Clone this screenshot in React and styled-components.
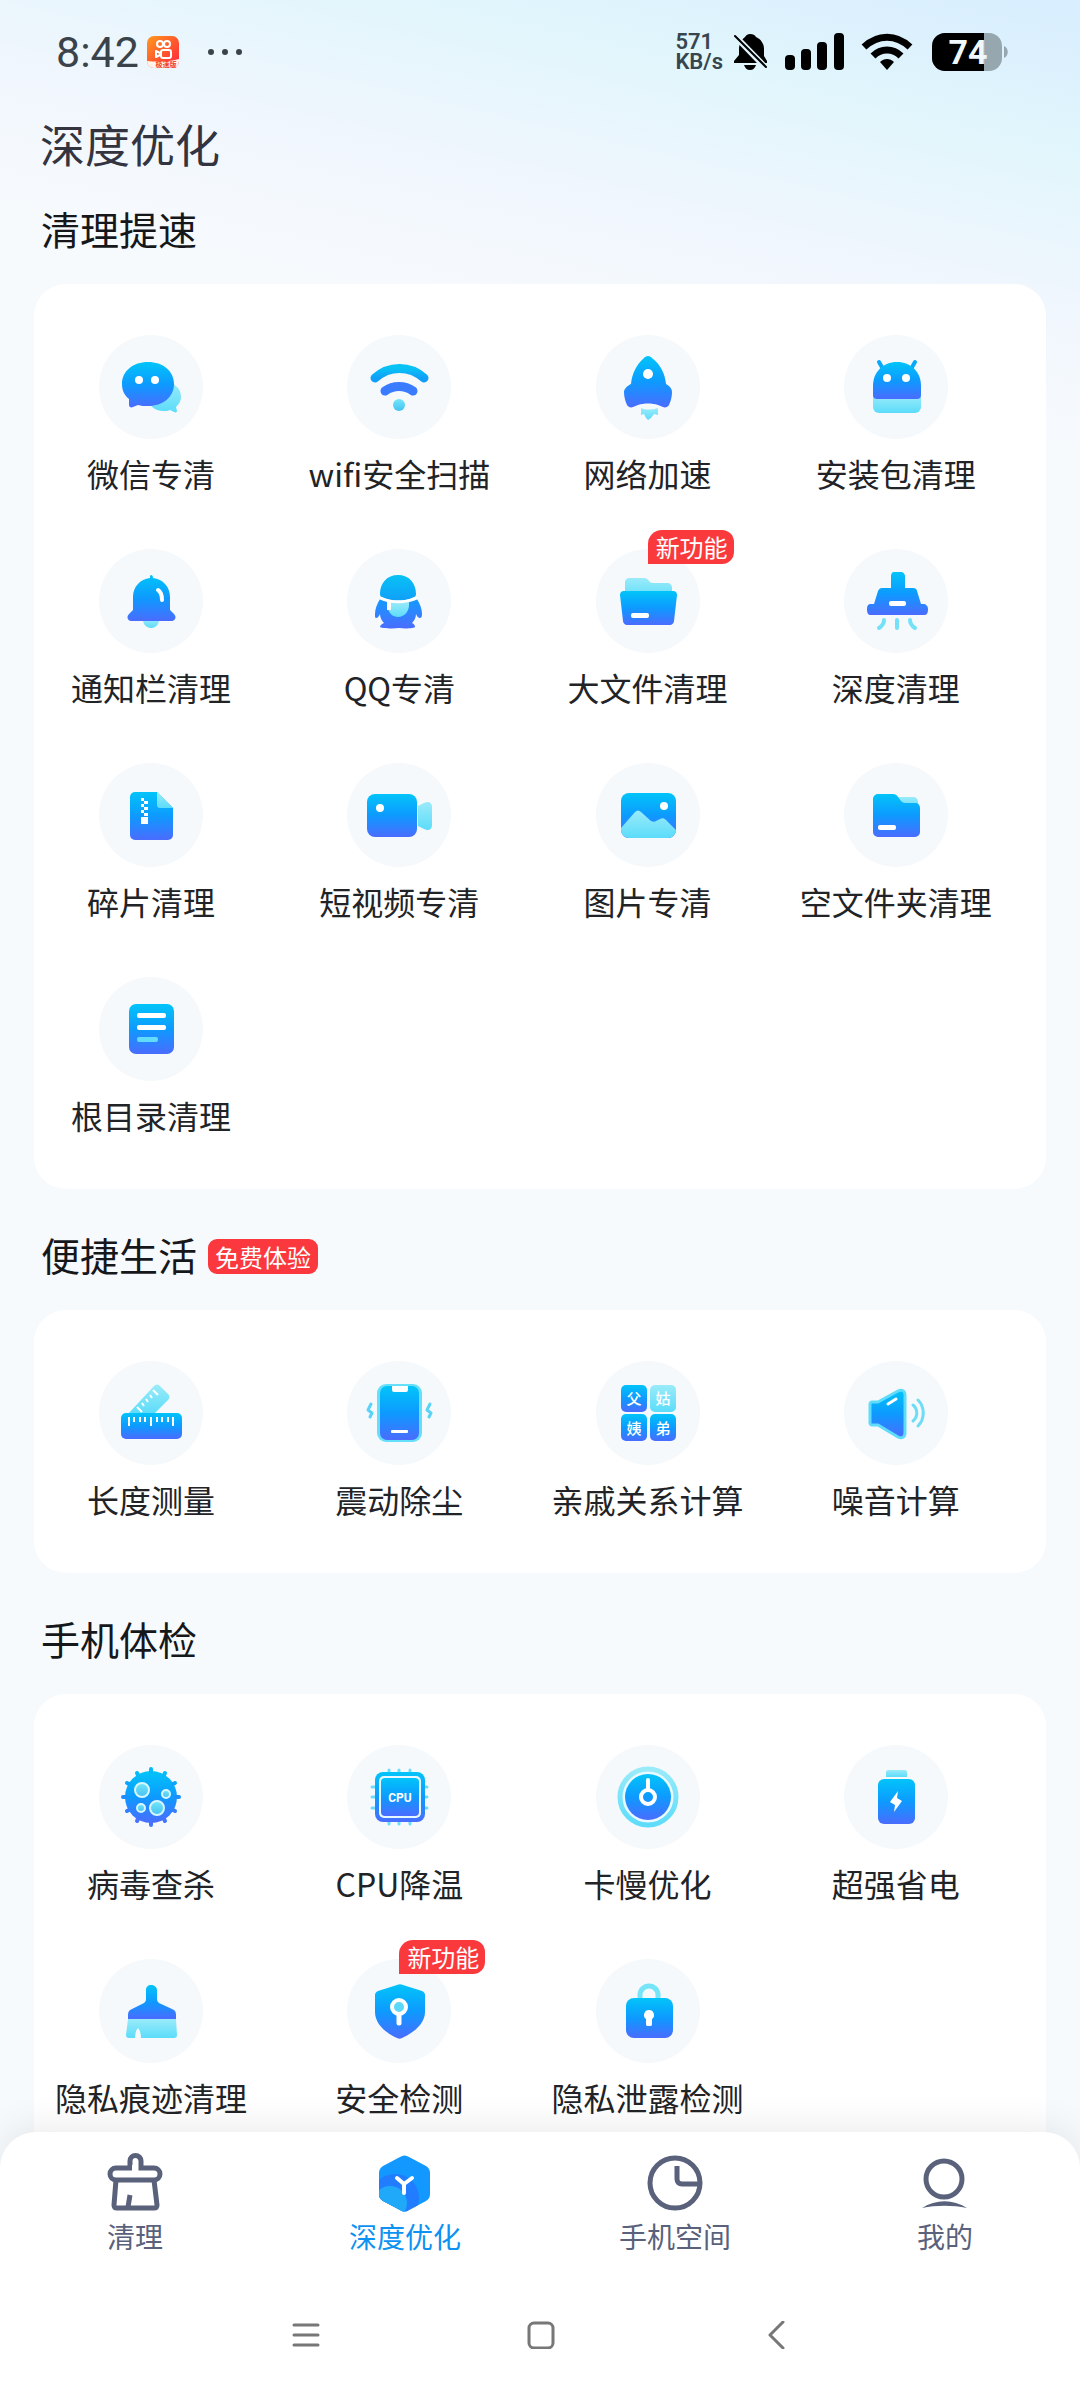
import styled, { createGlobalStyle } from "styled-components";

const GlobalStyle = createGlobalStyle`
  * {
    box-sizing: border-box;
  }

  body {
    margin: 0;
    font-family: "Noto Sans CJK SC", "Noto Sans", sans-serif;
    color: #222326;
  }

  button {
    border: none;
    padding: 0;
    background: none;
    font-family: inherit;
    color: inherit;
    cursor: pointer;
  }
`;

const MAIN = "url(#main)";
const LIGHT = "url(#light)";

/* Every tile icon is drawn on the same 104 x 104 grid */
const icons = {
  wechat: (
    <>
      <path
        fill={LIGHT}
        d="M65 47c10 0 17 6 17 15 0 4-2 7-5 10l1 4c0 1-1 2-3 1l-4-2c-2 1-4 1-6 1-10 0-16-6-16-14s7-15 16-15Z"
      />
      <path
        fill={MAIN}
        d="M49 27c15 0 26 9 26 22s-11 22-26 22c-4 0-7 0-10-1l-5 2c-2 1-4 0-4-2v-6c-5-4-7-9-7-15 0-13 11-22 26-22Z"
      />
      <circle cx="40" cy="45" r="4" fill="#fff" />
      <circle cx="56" cy="45" r="4" fill="#fff" />
    </>
  ),
  wifi: (
    <g fill="none" strokeLinecap="round">
      <path stroke="url(#sky)" strokeWidth="9" d="M28 43a36 36 0 0 1 49 0" />
      <path stroke="#3a7cff" strokeWidth="9" d="M38 56a24 24 0 0 1 28 0" />
      <circle cx="52" cy="70" r="6" fill="url(#lightDeep)" />
    </g>
  ),
  rocket: (
    <>
      <path
        fill={MAIN}
        d="M52 21c2 0 3 1 4 2 9 7 13 16 14 26 4 2 6 5 6 8 0 4-1 9-3 13-1 2-4 3-6 2l-5-2c-6-2-14-2-20 0l-5 2c-2 1-5 0-6-2-2-4-3-9-3-13 0-3 3-6 7-8 1-10 5-19 13-26 1-1 2-2 4-2Z"
      />
      <circle cx="52" cy="39" r="5" fill="#fff" />
      <path
        fill={LIGHT}
        d="M45 73c5 2 11 2 17 0v7l-4-1-3 4-3 2-2-2-2-4-3 1Z"
      />
    </>
  ),
  android: (
    <>
      <path fill={LIGHT} d="M29 60h48v12a6 6 0 0 1-6 6H35a6 6 0 0 1-6-6Z" />
      <path
        stroke="#08a9fb"
        strokeWidth="4"
        strokeLinecap="round"
        d="m35 27 4 7M71 27l-4 7"
      />
      <path
        fill={MAIN}
        d="M53 27c14 0 24 10 24 24v9a4 4 0 0 1-4 4H33a4 4 0 0 1-4-4v-9c0-14 10-24 24-24Z"
      />
      <circle cx="43" cy="43" r="4" fill="#fff" />
      <circle cx="62" cy="43" r="4" fill="#fff" />
    </>
  ),
  bell: (
    <>
      <path fill={LIGHT} d="M44 70h16a8 8 0 0 1-16 2Z" />
      <path
        fill={MAIN}
        d="M52 26c1 0 2 1 2 3 10 1 17 9 17 19v13l4 4c3 3 1 7-2 7H32c-3 0-5-4-2-7l4-4V48c0-10 7-18 17-19 0-2 0-3 1-3Z"
      />
      <path
        stroke="#fff"
        strokeWidth="4"
        strokeLinecap="round"
        fill="none"
        d="M59 41c3 2 4 5 4 10"
      />
    </>
  ),
  qq: (
    <>
      <path
        fill="url(#sky)"
        d="M51 26c11 0 18 8 18 19 0 2-1 3-2 3-10 5-22 5-32 0-1 0-2-1-2-3 0-11 7-19 18-19Z"
      />
      <path
        fill="url(#deep)"
        d="M33 50c11 5 25 5 37 0 3 5 5 10 5 15 0 3-1 4-2 4-2 0-3-2-4-4 0 4-2 7-4 9 2 1 3 2 3 4 0 1-9 2-16 1-7 1-19 0-19-1 0-2 2-3 4-4-2-2-4-5-4-9-1 2-2 4-4 4-1 0-1-1-1-4 0-5 2-10 5-15Z"
      />
      <path fill={LIGHT} d="M42 53c7 1 14 1 20 0v3c0 7-5 12-11 12-5 0-10-4-10-10Z" />
      <path stroke="#fff" strokeWidth="4" d="M42 52v9" />
      <path stroke="#fff" strokeWidth="3" fill="none" d="M33 49c11 5 26 5 37 0" />
    </>
  ),
  bigFolder: (
    <>
      <path
        fill={LIGHT}
        d="M33 29h15c2 0 4 1 5 3 1 1 2 2 4 2h14c3 0 5 2 5 5v12H29V33c0-2 2-4 4-4Z"
      />
      <path
        fill={MAIN}
        d="M28 42h49c3 0 4 2 4 4l-3 26c0 2-2 4-4 4H31c-2 0-4-2-4-4l-3-26c0-2 1-4 4-4Z"
      />
      <rect x="35" y="64" width="18" height="5" rx="2" fill="#fff" />
    </>
  ),
  vacuum: (
    <>
      <path
        fill={MAIN}
        d="M50 23h7c2 0 4 2 4 4v12h8c2 0 4 1 4 3l4 13h2c3 0 5 2 5 5 0 4-1 6-4 6H27c-3 0-4-2-4-6 0-3 1-5 4-5h3l4-13c1-2 2-3 4-3h9V27c0-2 1-4 3-4Z"
      />
      <rect x="45" y="52" width="17" height="5" rx="2" fill="#fff" />
      <path
        stroke="#74e1f8"
        strokeWidth="4"
        strokeLinecap="round"
        fill="none"
        d="M40 71c0 4-2 6-5 8M53 71v8M66 71c0 4 2 6 5 8"
      />
    </>
  ),
  zip: (
    <>
      <path
        fill={MAIN}
        d="M36 29h22l16 16v27a5 5 0 0 1-5 5H36a5 5 0 0 1-5-5V34a5 5 0 0 1 5-5Z"
      />
      <path fill={LIGHT} d="m58 29 16 16H61c-2 0-3-1-3-3Z" />
      <path
        fill="#fff"
        d="M42 35h3v3h-3zM45 38h4v3h-4zM42 41h3v3h-3zM45 44h4v3h-4zM42 47h3v3h-3zM45 50h4v3h-4zM42 54h7v7h-7z"
      />
    </>
  ),
  video: (
    <>
      <path
        fill={LIGHT}
        d="m71 43 6-3c4-2 8-1 8 4v18c0 5-4 6-8 4l-6-3Z"
      />
      <rect x="20" y="31" width="50" height="43" rx="8" fill={MAIN} />
      <circle cx="33" cy="45" r="4" fill="#fff" />
    </>
  ),
  picture: (
    <>
      <rect x="25" y="30" width="55" height="45" rx="8" fill={MAIN} />
      <path
        fill={LIGHT}
        d="m25 65 14-16c2-2 4-2 6 0l10 9c2 1 4 1 5 0l4-2c2-1 4-1 6 1l10 10a8 8 0 0 1-8 8H33a8 8 0 0 1-8-8Z"
      />
      <circle cx="68" cy="43" r="4" fill="#fff" />
    </>
  ),
  folder: (
    <>
      <path fill={LIGHT} d="M52 34h17c3 0 5 2 5 5l1 8H55Z" />
      <path
        fill={MAIN}
        d="M34 31h15c2 0 4 1 5 3l3 4c1 1 3 2 4 2h10c3 0 5 2 5 5v24a5 5 0 0 1-5 5H34a5 5 0 0 1-5-5V36a5 5 0 0 1 5-5Z"
      />
      <rect x="34" y="62" width="18" height="5" rx="2" fill="#fff" />
    </>
  ),
  list: (
    <>
      <rect x="30" y="27" width="45" height="50" rx="7" fill={MAIN} />
      <rect x="38" y="36" width="29" height="5" rx="2" fill="#fff" />
      <rect x="38" y="48" width="29" height="5" rx="2" fill="#fff" />
      <rect x="38" y="60" width="21" height="5" rx="2" fill="#62dcfb" />
    </>
  ),
  ruler: (
    <>
      <path
        fill={LIGHT}
        d="m29 53 26-28c2-2 4-2 6 0l8 8c2 2 2 4 0 6L55 53Z"
      />
      <path
        stroke="#fff"
        strokeWidth="2"
        d="m38 46 5 5M43 42l2 3M47 38l2 3M51 34l2 3M54 29l5 5"
      />
      <rect x="22" y="52" width="61" height="26" rx="5" fill={MAIN} />
      <path
        stroke="#fff"
        strokeWidth="2"
        d="M30 56v9M35 56v5M41 56v5M46 56v5M52 56v9M58 56v5M63 56v5M69 56v5M74 56v9"
      />
    </>
  ),
  phone: (
    <>
      <rect x="30" y="23" width="45" height="58" rx="9" fill="#66e0fa" />
      <rect x="33" y="25" width="39" height="54" rx="7" fill={MAIN} />
      <path fill="#fff" d="M45 25h16v4a2 2 0 0 1-2 2H47a2 2 0 0 1-2-2Z" />
      <rect x="44" y="69" width="17" height="3" rx="1" fill="#fff" />
      <path
        stroke="#59d3f7"
        strokeWidth="3"
        strokeLinecap="round"
        strokeLinejoin="round"
        fill="none"
        d="m24 43-3 6 4 3-2 4M83 43l-3 6 4 3-2 4"
      />
    </>
  ),
  family: (
    <>
      <rect x="25" y="24" width="26" height="27" rx="5" fill={MAIN} />
      <rect x="54" y="24" width="26" height="27" rx="5" fill={LIGHT} />
      <rect x="25" y="53" width="26" height="27" rx="5" fill={MAIN} />
      <rect x="54" y="53" width="26" height="27" rx="5" fill={MAIN} />
      <g fill="#fff" fontSize="15" fontWeight="500" textAnchor="middle">
        <text x="38" y="43">父</text>
        <text x="67" y="43">姑</text>
        <text x="38" y="73">姨</text>
        <text x="67" y="73">弟</text>
      </g>
    </>
  ),
  speaker: (
    <>
      <path
        fill={MAIN}
        stroke="#5fdcfa"
        strokeWidth="3"
        strokeLinejoin="round"
        d="M28 41h6l20-11c4-2 7 0 7 4v38c0 4-3 6-7 4L34 64h-6c-1 0-2-1-2-2V43c0-1 1-2 2-2Z"
      />
      <path
        stroke="#fff"
        strokeWidth="3"
        strokeLinecap="round"
        d="m44 43 8-5"
      />
      <path
        stroke="#6fdcf6"
        strokeWidth="3"
        strokeLinecap="round"
        fill="none"
        d="M69 44c5 4 5 12 0 16M74 39c7 7 7 19 0 26"
      />
    </>
  ),
  virus: (
    <>
      <circle cx="52" cy="52" r="26" fill={MAIN} />
      <g strokeWidth="4" strokeLinecap="round">
        <path stroke="#05b9fa" d="M52 24v3M38 28l1 2M66 28l-1 2" />
        <path stroke="#0aa5fd" d="m28 38 2 1M76 38l-2 1" />
        <path stroke="#1d8eff" d="M24 52h3M80 52h-3" />
        <path stroke="#3280ff" d="m28 66 2-1M76 66l-2-1" />
        <path stroke="#4473ff" d="m38 76 1-2M66 76l-1-2M52 80v-3" />
      </g>
      <g fill="url(#lightDeep)" stroke="#d6f7ff" strokeWidth="2">
        <circle cx="43" cy="45" r="7" />
        <circle cx="58" cy="63" r="7" />
        <circle cx="67" cy="49" r="4" />
        <circle cx="42" cy="63" r="4" />
      </g>
    </>
  ),
  cpu: (
    <>
      <path
        stroke="#6bddf9"
        strokeWidth="3"
        strokeLinecap="round"
        d="M42 25v54M52 25v54M63 25v54M25 42h55M25 52h55M25 63h55"
      />
      <rect x="28" y="27" width="50" height="50" rx="8" fill={MAIN} />
      <rect x="32" y="31" width="42" height="42" rx="5" fill="#e6f8ff" />
      <rect x="34" y="33" width="38" height="38" rx="4" fill={MAIN} />
      <text
        x="53"
        y="57"
        fill="#fff"
        fontFamily="Roboto, sans-serif"
        fontSize="12"
        fontWeight="700"
        textAnchor="middle"
      >
        CPU
      </text>
    </>
  ),
  gauge: (
    <>
      <circle cx="52" cy="52" r="28" fill="#e8f9ff" stroke={LIGHT} strokeWidth="5" />
      <circle cx="52" cy="52" r="23" fill={MAIN} />
      <circle cx="52" cy="52" r="7" fill="none" stroke="#fff" strokeWidth="4" />
      <path stroke="#fff" strokeWidth="4" strokeLinecap="round" d="M52 35v9" />
    </>
  ),
  battery: (
    <>
      <path fill={LIGHT} d="M44 25h17c1 0 2 1 2 2v5H42v-5c0-1 1-2 2-2Z" />
      <rect x="34" y="34" width="37" height="45" rx="6" fill={MAIN} />
      <path fill="#fff" d="m54 46-8 11 5 3-1 7 8-11-5-3Z" />
    </>
  ),
  brush: (
    <>
      <path
        fill={LIGHT}
        d="M29 60h48l1 16c0 2-1 3-3 3H42c0-4-1-8-3-10-2 2-3 6-3 10h-6c-2 0-3-1-3-3Z"
      />
      <path
        fill={MAIN}
        d="M52 26c3 0 6 2 6 5v9c0 2 1 3 2 4l13 6c3 1 4 3 4 6v4H29v-4c0-3 1-5 4-6l12-6c1-1 2-2 2-4v-9c0-3 2-5 5-5Z"
      />
    </>
  ),
  shield: (
    <>
      <path
        fill={MAIN}
        d="m50 26-19 6c-2 1-3 2-3 4v17c0 11 9 20 22 26 2 1 3 1 5 0 13-6 23-15 23-26V36c0-2-1-3-3-4l-19-6c-2-1-4-1-6 0Z"
      />
      <path stroke="#fff" strokeWidth="5" strokeLinecap="round" d="M52 55v9" />
      <circle cx="52" cy="48" r="7" fill="#5cd8f8" stroke="#fff" strokeWidth="4" />
    </>
  ),
  lock: (
    <>
      <path
        stroke="#77e5f9"
        strokeWidth="5"
        fill="none"
        d="M44 42v-6a9 9 0 0 1 18 0v6"
      />
      <rect x="30" y="39" width="47" height="40" rx="8" fill={MAIN} />
      <path
        fill="#fff"
        d="M53 51a5 5 0 0 1 3 9v5c0 2-1 2-3 2s-3 0-3-2v-5a5 5 0 0 1 3-9Z"
      />
    </>
  ),
};

const sections = [
  {
    title: "清理提速",
    items: [
      { icon: "wechat", label: "微信专清" },
      { icon: "wifi", label: "wifi安全扫描" },
      { icon: "rocket", label: "网络加速" },
      { icon: "android", label: "安装包清理" },
      { icon: "bell", label: "通知栏清理" },
      { icon: "qq", label: "QQ专清" },
      { icon: "bigFolder", label: "大文件清理", isNew: true },
      { icon: "vacuum", label: "深度清理" },
      { icon: "zip", label: "碎片清理" },
      { icon: "video", label: "短视频专清" },
      { icon: "picture", label: "图片专清" },
      { icon: "folder", label: "空文件夹清理" },
      { icon: "list", label: "根目录清理" },
    ],
  },
  {
    title: "便捷生活",
    tag: "免费体验",
    items: [
      { icon: "ruler", label: "长度测量" },
      { icon: "phone", label: "震动除尘" },
      { icon: "family", label: "亲戚关系计算" },
      { icon: "speaker", label: "噪音计算" },
    ],
  },
  {
    title: "手机体检",
    items: [
      { icon: "virus", label: "病毒查杀" },
      { icon: "cpu", label: "CPU降温" },
      { icon: "gauge", label: "卡慢优化" },
      { icon: "battery", label: "超强省电" },
      { icon: "brush", label: "隐私痕迹清理" },
      { icon: "shield", label: "安全检测", isNew: true },
      { icon: "lock", label: "隐私泄露检测" },
    ],
  },
];

const tabs = [
  {
    label: "清理",
    icon: (
      <g fill="none" stroke="currentColor" strokeWidth="5">
        <path d="M25 16V9a5 5 0 0 1 11 0v7h13a6 6 0 0 1 0 12H11a6 6 0 0 1 0-12Z" />
        <path
          strokeLinejoin="round"
          d="M11 28 9 53c0 2 1 3 3 3h37c2 0 3-1 3-3l-3-25"
        />
        <path d="m25 43-2 12" />
        <path stroke="#fff" strokeWidth="6" d="M30 13v8" />
      </g>
    ),
  },
  {
    label: "深度优化",
    active: true,
    icon: (
      <>
        <clipPath id="hexagon">
          <path d="M25 5c3-2 6-2 9 0l17 9c3 2 4 4 4 7v21c0 3-1 5-4 7l-17 9c-3 2-6 2-9 0L8 49c-3-2-4-4-4-7V21c0-3 1-5 4-7Z" />
        </clipPath>
        <g clipPath="url(#hexagon)">
          <path fill="#1298ff" d="M0 0h60v60H0z" />
          <circle cx="20" cy="46" r="24" fill="#217cff" />
          <circle cx="15" cy="51" r="17" fill="#1fa9f8" />
        </g>
        <path
          stroke="#fff"
          strokeWidth="4"
          strokeLinecap="round"
          strokeLinejoin="round"
          fill="none"
          d="m22 26 7 6 8-6M29 32v9"
        />
      </>
    ),
  },
  {
    label: "手机空间",
    icon: (
      <g fill="none" stroke="currentColor" strokeWidth="5">
        <circle cx="30" cy="31" r="25" />
        <path d="M32 14v13c0 3 2 5 5 5h17" />
      </g>
    ),
  },
  {
    label: "我的",
    icon: (
      <>
        <circle
          cx="29"
          cy="27"
          r="18"
          fill="none"
          stroke="currentColor"
          strokeWidth="5"
        />
        <path fill="currentColor" d="M7 56c14-9 31-9 45 0-14-3-31-3-45 0Z" />
      </>
    ),
  },
];

const IconDefs = () => (
  <HiddenSvg aria-hidden="true">
    <defs>
      <linearGradient id="main" x1="0" y1="0" x2="0" y2="1">
        <stop offset="0" stopColor="#02c4f9" />
        <stop offset="0.5" stopColor="#0d9aff" />
        <stop offset="1" stopColor="#4a6cff" />
      </linearGradient>
      <linearGradient id="light" x1="0" y1="0" x2="0" y2="1">
        <stop offset="0" stopColor="#9aebf9" />
        <stop offset="1" stopColor="#5cdcfa" />
      </linearGradient>
      <linearGradient id="lightDeep" x1="0" y1="0" x2="0" y2="1">
        <stop offset="0" stopColor="#74e6f8" />
        <stop offset="1" stopColor="#45c2f2" />
      </linearGradient>
      <linearGradient id="sky" x1="0" y1="0" x2="0" y2="1">
        <stop offset="0" stopColor="#08c2f5" />
        <stop offset="1" stopColor="#109ff8" />
      </linearGradient>
      <linearGradient id="deep" x1="0" y1="0" x2="0" y2="1">
        <stop offset="0" stopColor="#149bff" />
        <stop offset="1" stopColor="#4a6cff" />
      </linearGradient>
      <linearGradient id="camera" x1="0" y1="0" x2="1" y2="1">
        <stop offset="0" stopColor="#ff9a1f" />
        <stop offset="0.5" stopColor="#ff5a2c" />
        <stop offset="1" stopColor="#ff2140" />
      </linearGradient>
    </defs>
  </HiddenSvg>
);

const StatusBar = () => (
  <Status>
    <Time>8:42</Time>
    <AppIcon viewBox="0 0 32 32" aria-hidden="true">
      <rect width="32" height="32" rx="7" fill="url(#camera)" />
      <path fill="#fff3ea" d="M0 25c10 1 21 1 32-2v2a7 7 0 0 1-7 7H7a7 7 0 0 1-7-7Z" />
      <g fill="none" stroke="#fff" strokeWidth="2">
        <circle cx="13" cy="8" r="3" />
        <circle cx="20" cy="8" r="3" />
        <rect x="14" y="14" width="10" height="8" rx="2" />
        <path strokeLinejoin="round" d="m9 15 4 2v2l-4 2Z" />
      </g>
      <text x="19" y="31" fontSize="7" fontWeight="700" fill="#f2402a" textAnchor="middle">
        极速版
      </text>
    </AppIcon>
    <More viewBox="0 0 40 8" aria-hidden="true">
      <circle cx="6" cy="4" r="3" />
      <circle cx="20" cy="4" r="3" />
      <circle cx="34" cy="4" r="3" />
    </More>
    <Speed>
      <span>571</span>
      <span>KB/s</span>
    </Speed>
    <Indicators viewBox="0 0 276 38" aria-hidden="true">
      {/* muted bell */}
      <path d="M17 1c3 0 5 1 6 3 5 2 8 7 8 12v7l3 5v2H1v-2l5-6v-6c0-5 3-10 6-12 1-2 3-3 5-3Z" />
      <path d="M11 32h12c-1 3-3 5-6 5s-5-2-6-5Z" />
      <path stroke="#e1f4fc" strokeWidth="6" d="m0 1 34 35" />
      <path stroke="#000" strokeWidth="2" strokeLinecap="round" d="m2 3 31 31" />
      {/* signal */}
      <rect x="52" y="22" width="10" height="15" rx="4" />
      <rect x="68" y="16" width="10" height="21" rx="4" />
      <rect x="84" y="9" width="10" height="28" rx="4" />
      <rect x="101" y="0" width="10" height="37" rx="4" />
      {/* wifi */}
      <g fill="none" stroke="#000" strokeWidth="7">
        <path d="M131 14c14-13 32-13 46 0" />
        <path d="M140 23c8-8 20-8 28 0" />
      </g>
      <path d="M154 37 147 29c4-4 10-4 14 0Z" />
      {/* battery */}
      <clipPath id="cell">
        <rect x="199" y="0" width="70" height="38" rx="13" />
      </clipPath>
      <g clipPath="url(#cell)">
        <path fill="#96a7b0" d="M199 0h70v38h-70z" />
        <path d="M199 0h52v38h-52z" />
      </g>
      <path fill="#96a7b0" d="M271 13c5 2 5 10 0 12Z" />
      <text
        x="235"
        y="31"
        fill="#eef8fd"
        fontFamily="Roboto, sans-serif"
        fontSize="34"
        fontWeight="700"
        textAnchor="middle"
      >
        74
      </text>
    </Indicators>
  </Status>
);

const Section = ({ title, tag, items, first }) => (
  <section>
    <SectionTitle $first={first}>
      {title}
      {tag && <Tag>{tag}</Tag>}
    </SectionTitle>
    <Card>
      {items.map((item) => (
        <Tile key={item.label}>
          <Bubble viewBox="0 0 104 104" aria-hidden="true">
            <circle cx="52" cy="52" r="52" fill="#f5f9fc" />
            {icons[item.icon]}
          </Bubble>
          {item.label}
          {item.isNew && <NewBadge>新功能</NewBadge>}
        </Tile>
      ))}
    </Card>
  </section>
);

const App = () => {
  return (
    <Screen>
      <GlobalStyle />
      <IconDefs />
      <StatusBar />
      <Content>
        <PageTitle>深度优化</PageTitle>
        {sections.map((section, index) => (
          <Section key={section.title} first={index === 0} {...section} />
        ))}
      </Content>
      <Bottom>
        <TabBar>
          {tabs.map((tab) => (
            <Tab key={tab.label} $active={tab.active}>
              <TabIcon viewBox="0 0 60 60" aria-hidden="true">
                {tab.icon}
              </TabIcon>
              {tab.label}
            </Tab>
          ))}
        </TabBar>
        <SystemBar>
          <button aria-label="最近任务">
            <SystemIcon viewBox="0 0 28 28">
              <path d="M2 4h24M2 14h24M2 24h24" />
            </SystemIcon>
          </button>
          <button aria-label="主屏幕">
            <SystemIcon viewBox="0 0 28 28">
              <rect x="2" y="2" width="24" height="25" rx="5" />
            </SystemIcon>
          </button>
          <button aria-label="返回">
            <SystemIcon viewBox="0 0 28 28">
              <path d="M21 1 8 14l13 13" />
            </SystemIcon>
          </button>
        </SystemBar>
      </Bottom>
    </Screen>
  );
};

const Screen = styled.div`
  height: 100vh;
  display: flex;
  flex-direction: column;
  overflow: hidden;
  background: linear-gradient(
    193deg,
    #d8edfe 0,
    #e2f6fc 160px,
    #eff6fd 290px,
    #f7fafd 440px
  );
`;

const HiddenSvg = styled.svg`
  position: absolute;
  width: 0;
  height: 0;
`;

const Status = styled.header`
  height: 104px;
  flex-shrink: 0;
  display: flex;
  align-items: center;
  padding: 0 71px 0 56px;
`;

const Time = styled.span`
  font-family: Roboto, sans-serif;
  font-size: 43px;
  line-height: 48px;
  color: #3a4349;
`;

const AppIcon = styled.svg`
  width: 32px;
  height: 32px;
  margin-left: 8px;
`;

const More = styled.svg`
  width: 40px;
  height: 8px;
  margin-left: 26px;
  fill: #3a4349;
`;

const Speed = styled.span`
  display: flex;
  flex-direction: column;
  margin-left: auto;
  font-family: Roboto, sans-serif;
  font-size: 22px;
  font-weight: 600;
  line-height: 20px;
  color: #37464e;
`;

const Indicators = styled.svg`
  width: 276px;
  height: 38px;
  margin-left: 10px;
`;

const Content = styled.main`
  flex: 1;
  min-height: 0;
  overflow-y: auto;
  scrollbar-width: none;
  padding: 0 34px 40px;
`;

const PageTitle = styled.h1`
  margin: 0;
  padding: 8px 6px 0;
  font-size: 45px;
  font-weight: 400;
  line-height: 64px;
  color: #33343f;
`;

const SectionTitle = styled.h2`
  margin: 0;
  padding: ${(props) => (props.$first ? "24px" : "37px")} 7px 28px;
  display: flex;
  align-items: center;
  font-size: 39px;
  font-weight: 400;
  line-height: 56px;
  color: #15171a;
`;

const Tag = styled.span`
  margin: 4px 0 0 11px;
  padding: 0 7px;
  border-radius: 9px;
  background: #fb383d;
  color: #fff;
  font-size: 24px;
  line-height: 35px;
`;

const Card = styled.div`
  display: grid;
  grid-template-columns: repeat(4, 1fr);
  gap: 56px 48px;
  padding: 51px 50px 54px 17px;
  border-radius: 32px;
  background: #fff;
`;

const Tile = styled.button`
  position: relative;
  display: flex;
  flex-direction: column;
  align-items: center;
  gap: 14px;
  font-size: 32px;
  line-height: 40px;
  white-space: nowrap;
`;

const Bubble = styled.svg`
  width: 104px;
  height: 104px;
`;

const NewBadge = styled.span`
  position: absolute;
  top: -19px;
  left: 50%;
  padding: 0 6px 0 8px;
  border-radius: 14px 12px 12px 0;
  background: #fa393d;
  color: #fff;
  font-size: 24px;
  line-height: 34px;
`;

const Bottom = styled.footer`
  position: relative;
  flex-shrink: 0;
  margin-top: -40px;
  border-radius: 36px 36px 0 0;
  background: #fff;
  box-shadow: 0 -6px 36px rgba(0, 0, 0, 0.08);
`;

const TabBar = styled.nav`
  display: grid;
  grid-template-columns: repeat(4, 1fr);
  padding: 20px 0 16px;
`;

const Tab = styled.button`
  display: flex;
  flex-direction: column;
  align-items: center;
  gap: 6px;
  font-size: 28px;
  line-height: 36px;
  color: ${(props) => (props.$active ? "#0d92f2" : "#59617b")};
`;

const TabIcon = styled.svg`
  width: 60px;
  height: 60px;
`;

const SystemBar = styled.div`
  height: 130px;
  display: grid;
  grid-template-columns: repeat(3, 1fr);
  align-items: center;
  justify-items: center;
  padding: 0 186px 0 188px;
`;

const SystemIcon = styled.svg`
  display: block;
  width: 28px;
  height: 28px;
  fill: none;
  stroke: #777;
  stroke-width: 3;
  stroke-linecap: round;
  stroke-linejoin: round;
`;

export default App;
